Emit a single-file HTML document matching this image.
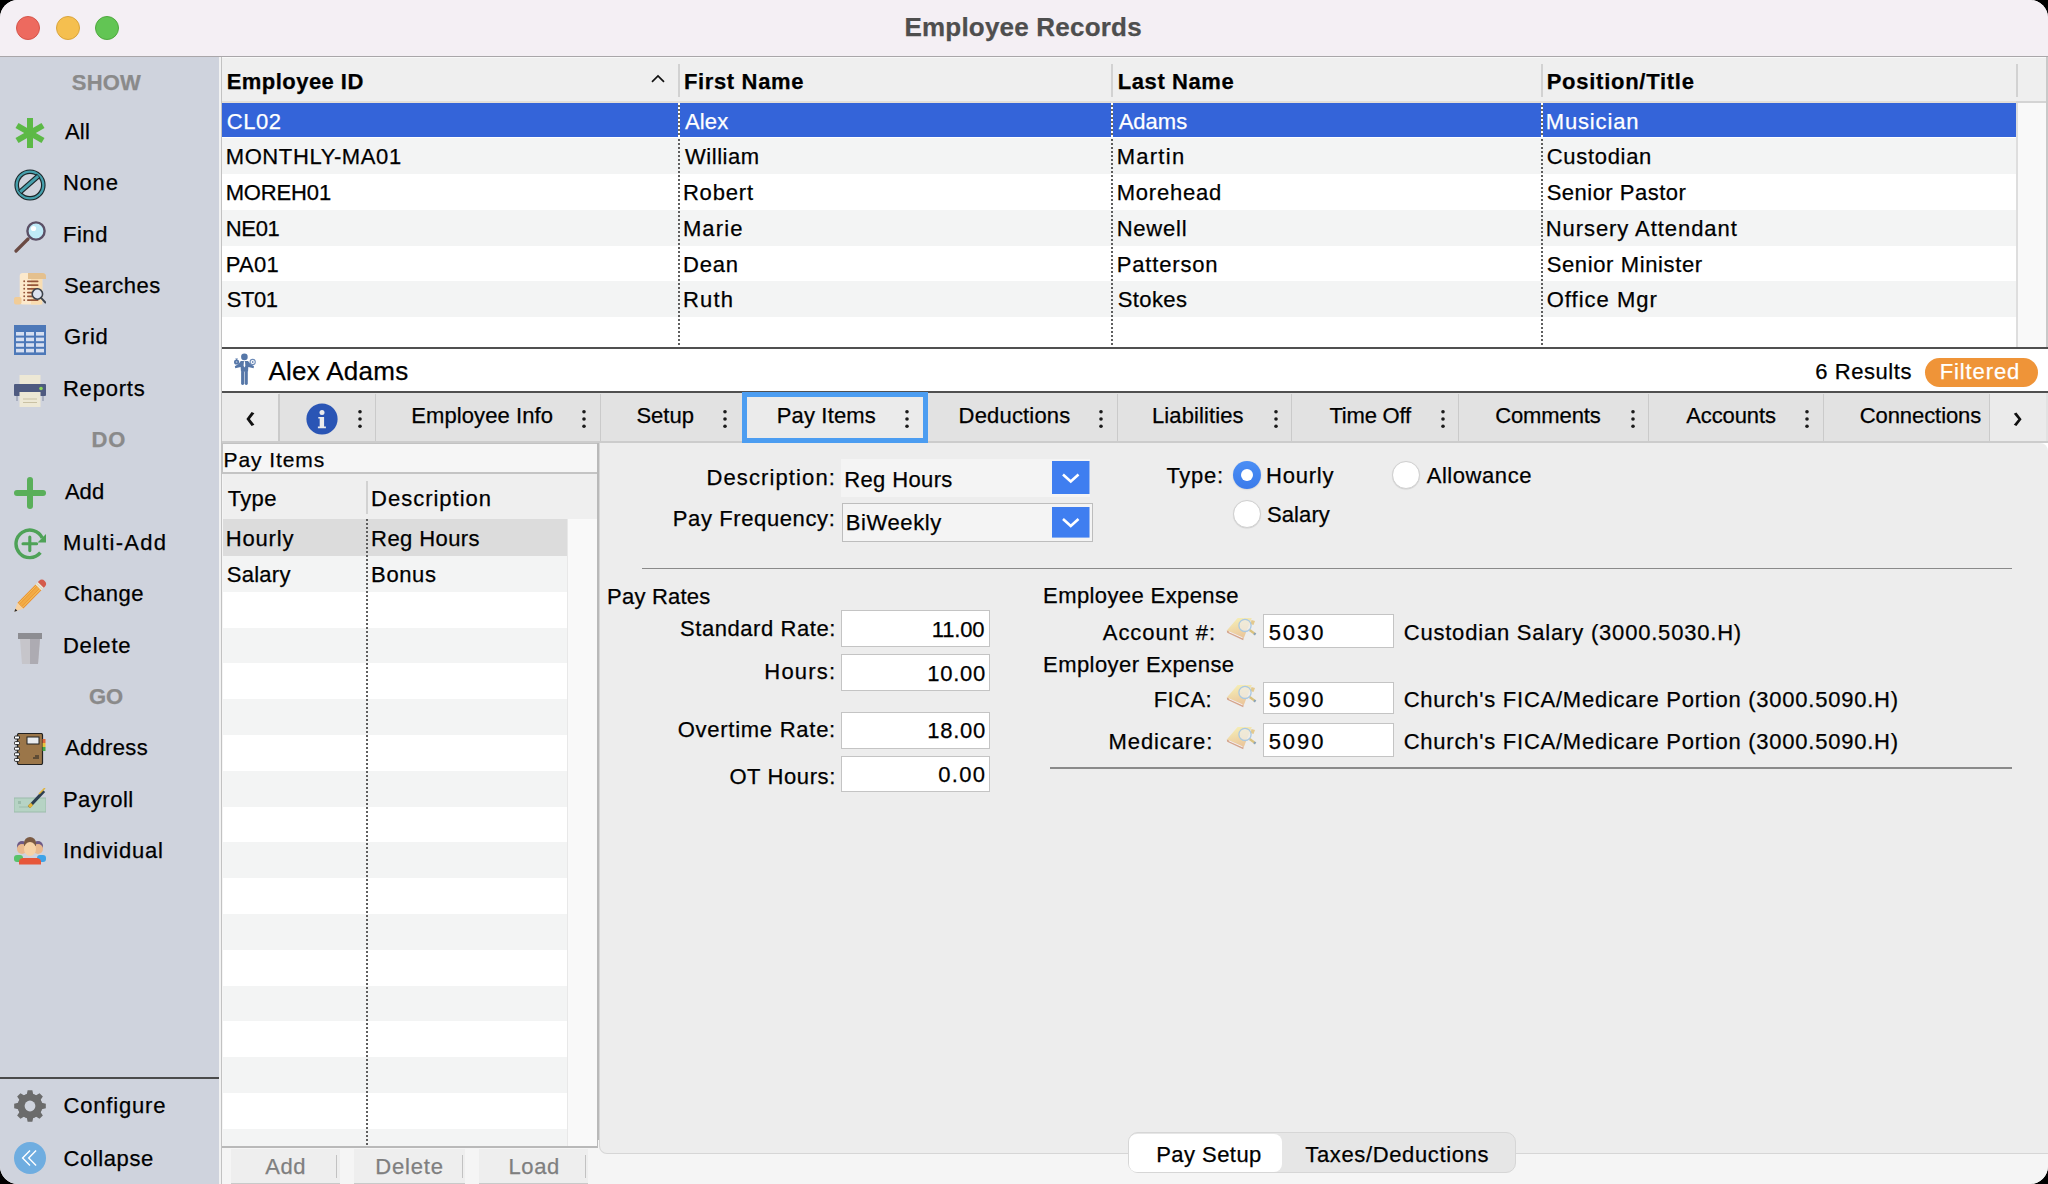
<!DOCTYPE html>
<html><head><meta charset="utf-8"><style>
html,body{margin:0;padding:0;background:#000;}
#w{position:relative;width:2048px;height:1184px;overflow:hidden;border-radius:18px;background:#fff;font-family:"Liberation Sans", sans-serif;color:#000;}
.t{position:absolute;white-space:nowrap;-webkit-text-stroke:0.25px currentColor;}
.r{position:absolute;}
</style></head><body><div id="w">
<div class="r" style="left:0px;top:0px;width:2048px;height:57px;background:#f4eff4;"></div>
<div class="r" style="left:0px;top:56px;width:2048px;height:1px;background:#a9a6a9;"></div>
<div class="r" style="left:15.799999999999999px;top:15.7px;width:24.2px;height:24.2px;border-radius:50%;background:#ed6a5f;box-sizing:border-box;border:1px solid #d5554b"></div>
<div class="r" style="left:55.6px;top:15.7px;width:24.2px;height:24.2px;border-radius:50%;background:#f5bf4f;box-sizing:border-box;border:1px solid #d9a43c"></div>
<div class="r" style="left:95.2px;top:15.7px;width:24.2px;height:24.2px;border-radius:50%;background:#62c554;box-sizing:border-box;border:1px solid #4fa83f"></div>
<div class="t" style="top:14.49px;font-size:26px;line-height:26px;font-weight:700;color:#4e4e4e;letter-spacing:0.200px;left:904.50px;">Employee Records</div>
<div class="r" style="left:0px;top:57px;width:219px;height:1127px;background:#cfd3dd;"></div>
<div class="r" style="left:219px;top:57px;width:2px;height:1127px;background:#f2f2f2;"></div>
<div class="r" style="left:221px;top:57px;width:2px;height:1127px;background:#c2c2c2;"></div>
<div class="t" style="top:71.57px;font-size:22px;line-height:22px;font-weight:700;color:#8a8a8a;letter-spacing:0.167px;left:71.80px;">SHOW</div>
<div class="t" style="top:429.17px;font-size:22px;line-height:22px;font-weight:700;color:#8a8a8a;letter-spacing:0.750px;left:91.50px;">DO</div>
<div class="t" style="top:685.92px;font-size:22px;line-height:22px;font-weight:700;color:#8a8a8a;left:89.00px;">GO</div>
<div class="t" style="top:121.07px;font-size:22px;line-height:22px;letter-spacing:0.300px;left:64.90px;">All</div>
<div class="t" style="top:172.42px;font-size:22px;line-height:22px;letter-spacing:0.800px;left:62.90px;">None</div>
<div class="t" style="top:223.77px;font-size:22px;line-height:22px;letter-spacing:0.567px;left:62.90px;">Find</div>
<div class="t" style="top:275.12px;font-size:22px;line-height:22px;letter-spacing:0.479px;left:63.90px;">Searches</div>
<div class="t" style="top:326.47px;font-size:22px;line-height:22px;letter-spacing:0.783px;left:63.90px;">Grid</div>
<div class="t" style="top:377.82px;font-size:22px;line-height:22px;letter-spacing:0.808px;left:62.90px;">Reports</div>
<div class="t" style="top:480.52px;font-size:22px;line-height:22px;letter-spacing:0.050px;left:64.90px;">Add</div>
<div class="t" style="top:531.87px;font-size:22px;line-height:22px;letter-spacing:1.262px;left:62.90px;">Multi-Add</div>
<div class="t" style="top:583.22px;font-size:22px;line-height:22px;letter-spacing:0.520px;left:63.90px;">Change</div>
<div class="t" style="top:634.57px;font-size:22px;line-height:22px;letter-spacing:0.820px;left:62.90px;">Delete</div>
<div class="t" style="top:737.27px;font-size:22px;line-height:22px;letter-spacing:0.350px;left:64.90px;">Address</div>
<div class="t" style="top:788.62px;font-size:22px;line-height:22px;letter-spacing:0.517px;left:62.90px;">Payroll</div>
<div class="t" style="top:839.97px;font-size:22px;line-height:22px;letter-spacing:0.789px;left:62.90px;">Individual</div>
<svg class="r" style="left:14px;top:117px" width="32" height="32" viewBox="0 0 32 32"><g stroke="#5cb946" stroke-width="6"><line x1="16" y1="1" x2="16" y2="31"/><line x1="3" y1="8.5" x2="29" y2="23.5"/><line x1="3" y1="23.5" x2="29" y2="8.5"/></g></svg>
<svg class="r" style="left:14px;top:168.9px" width="32" height="32" viewBox="0 0 32 32"><circle cx="16" cy="16" r="15.6" fill="#1b2629"/><circle cx="16" cy="16" r="14.5" fill="#46a0ad"/><circle cx="16" cy="16" r="12.2" fill="#1b2629"/><circle cx="16" cy="16" r="11" fill="#cfd3dd"/><line x1="5.8" y1="23.2" x2="24.6" y2="6.8" stroke="#1b2629" stroke-width="5.2"/><line x1="6.2" y1="22.8" x2="24.2" y2="7.2" stroke="#46a0ad" stroke-width="3"/></svg>
<svg class="r" style="left:14px;top:221px" width="32" height="32" viewBox="0 0 32 32"><line x1="2" y1="30" x2="14" y2="18" stroke="#6b4a43" stroke-width="3.2" stroke-linecap="round"/><circle cx="22" cy="10" r="8.6" fill="#bfeaf7" stroke="#5b5066" stroke-width="2.4"/><circle cx="19.5" cy="7.5" r="2.6" fill="#fff"/></svg>
<svg class="r" style="left:14px;top:272.5px" width="32" height="32" viewBox="0 0 32 32"><rect x="5.7" y="0" width="22.6" height="31.5" rx="3" fill="#fce9cc"/><rect x="17" y="0" width="11.3" height="31.5" fill="#f9ddb2"/><path d="M14 0 H28.5 a3.5 3.5 0 0 1 3.5 3.5 v2.5 H14 Z" fill="#e4c08e"/><rect x="0" y="24" width="7.5" height="7.5" rx="2" fill="#f1cc97"/><g fill="#95553a"><circle cx="10.2" cy="8.3" r="0.95"/><rect x="13" y="7.5" width="11.5" height="1.7" rx="0.8"/><circle cx="10.2" cy="12.100000000000001" r="0.95"/><rect x="13" y="11.3" width="11.5" height="1.7" rx="0.8"/><circle cx="10.2" cy="15.8" r="0.95"/><rect x="13" y="15" width="11.5" height="1.7" rx="0.8"/><circle cx="10.2" cy="19.6" r="0.95"/><rect x="13" y="18.8" width="11.5" height="1.7" rx="0.8"/><circle cx="10.2" cy="23.3" r="0.95"/><rect x="13" y="22.5" width="11.5" height="1.7" rx="0.8"/><circle cx="10.2" cy="27.1" r="0.95"/><rect x="13" y="26.3" width="11.5" height="1.7" rx="0.8"/></g><circle cx="23.4" cy="21" r="5.2" fill="#dde3f0" stroke="#3d434c" stroke-width="1.6"/><line x1="27.1" y1="24.8" x2="31.4" y2="29.6" stroke="#3d434c" stroke-width="1.9" stroke-linecap="round"/></svg>
<svg class="r" style="left:14px;top:325px" width="32" height="32" viewBox="0 0 32 32"><rect x="0" y="0" width="32" height="30" fill="#4d78b8"/><g fill="#d7dff0"><rect x="2" y="7.0" width="8" height="3.6"/><rect x="12" y="7.0" width="8" height="3.6"/><rect x="22" y="7.0" width="8" height="3.6"/><rect x="2" y="12.6" width="8" height="3.6"/><rect x="12" y="12.6" width="8" height="3.6"/><rect x="22" y="12.6" width="8" height="3.6"/><rect x="2" y="18.2" width="8" height="3.6"/><rect x="12" y="18.2" width="8" height="3.6"/><rect x="22" y="18.2" width="8" height="3.6"/><rect x="2" y="23.799999999999997" width="8" height="3.6"/><rect x="12" y="23.799999999999997" width="8" height="3.6"/><rect x="22" y="23.799999999999997" width="8" height="3.6"/></g></svg>
<svg class="r" style="left:14px;top:375px" width="32" height="32" viewBox="0 0 32 32"><rect x="5.5" y="0" width="21" height="12" fill="#ede8d5"/><rect x="0" y="9" width="32" height="12" rx="1" fill="#4e5a80"/><rect x="2" y="21" width="2" height="5" fill="#aab0c0"/><rect x="28" y="21" width="2" height="5" fill="#aab0c0"/><circle cx="27" cy="13.5" r="1.8" fill="#8fd65a"/><rect x="5.5" y="17" width="21" height="15" fill="#ede8d5"/><g stroke="#c9c1a4" stroke-width="1"><line x1="9" y1="24" x2="23" y2="24"/><line x1="9" y1="27.5" x2="23" y2="27.5"/></g></svg>
<svg class="r" style="left:14px;top:477px" width="32" height="32" viewBox="0 0 32 32"><g stroke="#5aaf5a" stroke-width="6" stroke-linecap="round"><line x1="16" y1="3" x2="16" y2="29"/><line x1="3" y1="16" x2="29" y2="16"/></g></svg>
<svg class="r" style="left:14px;top:528px" width="32" height="32" viewBox="0 0 32 32"><path d="M28.3 10 A13.8 13.8 0 1 0 26.4 24.7" fill="none" stroke="#4ea257" stroke-width="3.4"/><path d="M32.3 5.6 L32.3 14.4 L23.6 14.4 Z" fill="#4ea257"/><g stroke="#4ea257" stroke-width="3.1" stroke-linecap="round"><line x1="15.8" y1="9" x2="15.8" y2="22.6"/><line x1="9" y1="15.8" x2="22.6" y2="15.8"/></g></svg>
<svg class="r" style="left:14px;top:632px" width="32" height="32" viewBox="0 0 32 32"><rect x="4" y="1" width="24" height="6" fill="#8d8d92"/><path d="M6 7 H26 L24 32 H8 Z" fill="#c6c5ca"/><path d="M16 7 H26 L24 32 H16 Z" fill="#adabb2"/></svg>
<svg class="r" style="left:14px;top:733px" width="32" height="32" viewBox="0 0 32 32"><rect x="3.5" y="0.5" width="25" height="31" rx="1.5" fill="#9b7649" stroke="#222" stroke-width="1.2"/><rect x="13" y="4" width="12" height="7" fill="#e9ecef" stroke="#222" stroke-width="1"/><g fill="#fff" stroke="#222" stroke-width="1"><rect x="0.5" y="3.0" width="5" height="3" rx="1"/><rect x="0.5" y="8.6" width="5" height="3" rx="1"/><rect x="0.5" y="14.2" width="5" height="3" rx="1"/><rect x="0.5" y="19.799999999999997" width="5" height="3" rx="1"/><rect x="0.5" y="25.4" width="5" height="3" rx="1"/></g><rect x="28.5" y="6" width="3" height="4" fill="#e06a3a"/><rect x="28.5" y="10" width="3" height="4" fill="#e8c23a"/><rect x="28.5" y="14" width="3" height="4" fill="#48a848"/><line x1="19" y1="25" x2="25" y2="25" stroke="#222"/><line x1="21" y1="23" x2="25" y2="23" stroke="#222"/></svg>
<svg class="r" style="left:14px;top:788px" width="32" height="32" viewBox="0 0 32 32"><rect x="0" y="10" width="32" height="14" fill="#b6d3c4" stroke="#9cbcab" stroke-width="1"/><rect x="4" y="13" width="3" height="3" fill="#9cbcab"/><line x1="5" y1="19" x2="16" y2="19" stroke="#9cbcab" stroke-width="1"/><line x1="15" y1="19" x2="30" y2="3" stroke="#2c3e50" stroke-width="3.2"/><line x1="15" y1="19" x2="18" y2="16" stroke="#e0b43a" stroke-width="3.2"/><line x1="25" y1="6" x2="31" y2="0" stroke="#e0b43a" stroke-width="1.5"/></svg>
<svg class="r" style="left:14px;top:836px" width="32" height="32" viewBox="0 0 32 32"><circle cx="8" cy="10" r="5" fill="#6d5a86"/><circle cx="24" cy="10" r="5" fill="#6d5a86"/><circle cx="8" cy="13" r="5" fill="#e9b98e"/><circle cx="24" cy="13" r="5" fill="#e9b98e"/><rect x="0" y="19" width="9" height="7" rx="3" fill="#57c26a"/><rect x="23" y="19" width="9" height="7" rx="3" fill="#3da3e8"/><path d="M10 7 a6 6 0 0 1 12 0 v3 h-12 z" fill="#7b5a43"/><ellipse cx="16" cy="13" rx="6" ry="7" fill="#f6d2a6"/><path d="M5 27 a4 4 0 0 1 4 -5 h14 a4 4 0 0 1 4 5 v1.5 h-22 z" fill="#e6573a"/></svg>
<svg class="r" style="left:10px;top:574px" width="40" height="42" viewBox="0 0 40 42"><g transform="translate(4.3 37.8) rotate(-45.4) scale(0.93)"><path d="M0 0 L9.5 -4.4 L9.5 4.4 Z" fill="#f7d2a2"/><path d="M0 0 L3.2 -1.5 L3.2 1.5 Z" fill="#2b2b2b"/><rect x="9.5" y="-4.4" width="27.5" height="8.8" fill="#ec9130"/><rect x="9.5" y="-1.6" width="27.5" height="3.2" fill="#f2ab45"/><rect x="9.5" y="-3.2" width="27.5" height="0.8" fill="#f3cf6a"/><rect x="9.5" y="2.4" width="27.5" height="0.8" fill="#f3cf6a"/><rect x="37" y="-4.4" width="3.6" height="8.8" fill="#eeeada"/><rect x="38.2" y="-4.4" width="0.9" height="8.8" fill="#d7d2b8"/><path d="M40.6 -4.4 h1.6 a4.4 4.4 0 0 1 0 8.8 h-1.6 Z" fill="#d45b4b"/></g></svg>
<div class="r" style="left:0px;top:1077px;width:219px;height:2px;background:#4a4a4a;"></div>
<div class="t" style="top:1095.27px;font-size:22px;line-height:22px;letter-spacing:0.812px;left:63.50px;">Configure</div>
<div class="t" style="top:1147.57px;font-size:22px;line-height:22px;letter-spacing:0.586px;left:63.50px;">Collapse</div>
<svg class="r" style="left:13.75px;top:1090.2px" width="32" height="32" viewBox="0 0 32 32"><path d="M12.82 4.12 L13.64 0.18 L18.36 0.18 L19.18 4.12 L22.15 5.35 L25.52 3.14 L28.86 6.48 L26.65 9.85 L27.88 12.82 L31.82 13.64 L31.82 18.36 L27.88 19.18 L26.65 22.15 L28.86 25.52 L25.52 28.86 L22.15 26.65 L19.18 27.88 L18.36 31.82 L13.64 31.82 L12.82 27.88 L9.85 26.65 L6.48 28.86 L3.14 25.52 L5.35 22.15 L4.12 19.18 L0.18 18.36 L0.18 13.64 L4.12 12.82 L5.35 9.85 L3.14 6.48 L6.48 3.14 L9.85 5.35 Z" fill="#6b6b6b"/><circle cx="16" cy="16" r="12.3" fill="#6b6b6b"/><circle cx="16" cy="16" r="5.4" fill="#cfd3dd"/></svg>
<svg class="r" style="left:14px;top:1141.8px" width="32" height="32" viewBox="0 0 32 32"><circle cx="16" cy="16" r="16" fill="#6fade0"/><g fill="none" stroke="#fff" stroke-width="1.4"><polyline points="16,8.6 8.6,16 16,23.4"/><polyline points="22.1,8.6 14.7,16 22.1,23.4"/></g></svg>
<div class="r" style="left:222px;top:57px;width:1826px;height:45px;background:#efefef;"></div>
<div class="r" style="left:222px;top:101px;width:1826px;height:1.5px;background:#e4dfd8;"></div>
<div class="t" style="top:71.17px;font-size:22px;line-height:22px;font-weight:700;letter-spacing:0.460px;left:226.70px;">Employee ID</div>
<div class="t" style="top:71.17px;font-size:22px;line-height:22px;font-weight:700;letter-spacing:0.656px;left:683.90px;">First Name</div>
<div class="t" style="top:71.17px;font-size:22px;line-height:22px;font-weight:700;letter-spacing:0.600px;left:1117.70px;">Last Name</div>
<div class="t" style="top:71.17px;font-size:22px;line-height:22px;font-weight:700;letter-spacing:0.731px;left:1546.70px;">Position/Title</div>
<div class="r" style="left:678px;top:64px;width:2px;height:32.7px;background:#d2d2d2;"></div>
<div class="r" style="left:1111px;top:64px;width:2px;height:32.7px;background:#d2d2d2;"></div>
<div class="r" style="left:1541px;top:64px;width:2px;height:32.7px;background:#d2d2d2;"></div>
<div class="r" style="left:2016px;top:64px;width:2px;height:32.7px;background:#d2d2d2;"></div>
<svg class="r" style="left:650px;top:73.5px" width="16" height="10" viewBox="0 0 16 10"><polyline points="2,7.8 8,2 14,7.8" fill="none" stroke="#111" stroke-width="1.7"/></svg>
<div class="r" style="left:222px;top:57px;width:1826px;height:1.2px;background:#f8f8f8;"></div>
<div class="r" style="left:222px;top:102.5px;width:1795px;height:35.75px;background:#fff;"></div>
<div class="r" style="left:222px;top:138.25px;width:1795px;height:35.75px;background:#f3f4f4;"></div>
<div class="r" style="left:222px;top:174.0px;width:1795px;height:35.75px;background:#fff;"></div>
<div class="r" style="left:222px;top:209.75px;width:1795px;height:35.75px;background:#f3f4f4;"></div>
<div class="r" style="left:222px;top:245.5px;width:1795px;height:35.75px;background:#fff;"></div>
<div class="r" style="left:222px;top:281.25px;width:1795px;height:35.75px;background:#f3f4f4;"></div>
<div class="r" style="left:222px;top:317.0px;width:1795px;height:30.0px;background:#fff;"></div>
<div class="r" style="left:222px;top:103.3px;width:1794px;height:33.5px;background:#3464d9;"></div>
<div class="t" style="top:110.67px;font-size:22px;line-height:22px;color:#fff;letter-spacing:0.567px;left:226.70px;">CL02</div>
<div class="t" style="top:110.67px;font-size:22px;line-height:22px;color:#fff;letter-spacing:0.200px;left:684.90px;">Alex</div>
<div class="t" style="top:110.67px;font-size:22px;line-height:22px;color:#fff;left:1118.70px;">Adams</div>
<div class="t" style="top:110.67px;font-size:22px;line-height:22px;color:#fff;letter-spacing:0.871px;left:1545.70px;">Musician</div>
<div class="t" style="top:146.27px;font-size:22px;line-height:22px;letter-spacing:0.618px;left:225.70px;">MONTHLY-MA01</div>
<div class="t" style="top:146.27px;font-size:22px;line-height:22px;letter-spacing:0.567px;left:684.90px;">William</div>
<div class="t" style="top:146.27px;font-size:22px;line-height:22px;letter-spacing:1.260px;left:1116.70px;">Martin</div>
<div class="t" style="top:146.27px;font-size:22px;line-height:22px;letter-spacing:0.700px;left:1546.70px;">Custodian</div>
<div class="t" style="top:181.97px;font-size:22px;line-height:22px;letter-spacing:-0.150px;left:225.70px;">MOREH01</div>
<div class="t" style="top:181.97px;font-size:22px;line-height:22px;letter-spacing:0.820px;left:682.90px;">Robert</div>
<div class="t" style="top:181.97px;font-size:22px;line-height:22px;letter-spacing:0.800px;left:1116.70px;">Morehead</div>
<div class="t" style="top:181.97px;font-size:22px;line-height:22px;letter-spacing:0.483px;left:1546.70px;">Senior Pastor</div>
<div class="t" style="top:217.57px;font-size:22px;line-height:22px;letter-spacing:-0.300px;left:225.70px;">NE01</div>
<div class="t" style="top:217.57px;font-size:22px;line-height:22px;letter-spacing:1.125px;left:682.90px;">Marie</div>
<div class="t" style="top:217.57px;font-size:22px;line-height:22px;letter-spacing:0.780px;left:1116.70px;">Newell</div>
<div class="t" style="top:217.57px;font-size:22px;line-height:22px;letter-spacing:0.938px;left:1545.70px;">Nursery Attendant</div>
<div class="t" style="top:253.87px;font-size:22px;line-height:22px;letter-spacing:0.267px;left:225.70px;">PA01</div>
<div class="t" style="top:253.87px;font-size:22px;line-height:22px;letter-spacing:0.867px;left:682.90px;">Dean</div>
<div class="t" style="top:253.87px;font-size:22px;line-height:22px;letter-spacing:0.838px;left:1116.70px;">Patterson</div>
<div class="t" style="top:253.87px;font-size:22px;line-height:22px;letter-spacing:0.621px;left:1546.70px;">Senior Minister</div>
<div class="t" style="top:288.97px;font-size:22px;line-height:22px;letter-spacing:-0.400px;left:226.70px;">ST01</div>
<div class="t" style="top:288.97px;font-size:22px;line-height:22px;letter-spacing:1.200px;left:682.90px;">Ruth</div>
<div class="t" style="top:288.97px;font-size:22px;line-height:22px;letter-spacing:0.400px;left:1117.70px;">Stokes</div>
<div class="t" style="top:288.97px;font-size:22px;line-height:22px;letter-spacing:1.022px;left:1546.70px;">Office Mgr</div>
<div class="r" style="left:678px;top:103px;width:2px;height:244px;background:repeating-linear-gradient(to bottom,#5e5e5e 0 2px,transparent 2px 4px)"></div>
<div class="r" style="left:678px;top:103.3px;width:2px;height:33.5px;background:repeating-linear-gradient(to bottom,#fff 0 2px,#6e6a60 2px 4px)"></div>
<div class="r" style="left:1111px;top:103px;width:2px;height:244px;background:repeating-linear-gradient(to bottom,#5e5e5e 0 2px,transparent 2px 4px)"></div>
<div class="r" style="left:1111px;top:103.3px;width:2px;height:33.5px;background:repeating-linear-gradient(to bottom,#fff 0 2px,#6e6a60 2px 4px)"></div>
<div class="r" style="left:1541px;top:103px;width:2px;height:244px;background:repeating-linear-gradient(to bottom,#5e5e5e 0 2px,transparent 2px 4px)"></div>
<div class="r" style="left:1541px;top:103.3px;width:2px;height:33.5px;background:repeating-linear-gradient(to bottom,#fff 0 2px,#6e6a60 2px 4px)"></div>
<div class="r" style="left:2016px;top:101px;width:30.2px;height:246px;background:#f9f9f9;"></div>
<div class="r" style="left:2016px;top:101px;width:1.5px;height:246px;background:#dedede;"></div>
<div class="r" style="left:2016px;top:101px;width:30.2px;height:2px;background:#d4d4d4;"></div>
<div class="r" style="left:2046.2px;top:57px;width:1.8px;height:290px;background:#c9c9c9;"></div>
<div class="r" style="left:2046.2px;top:393px;width:1.8px;height:48.5px;background:#c9c9c9;"></div>
<div class="r" style="left:222px;top:347px;width:1826px;height:1.8px;background:#505050;"></div>
<div class="r" style="left:222px;top:348.8px;width:1826px;height:42.2px;background:#fff;"></div>
<div class="r" style="left:222px;top:391px;width:1826px;height:1.8px;background:#505050;"></div>
<div class="t" style="top:357.59px;font-size:26px;line-height:26px;letter-spacing:0.289px;left:268.40px;">Alex Adams</div>
<div class="t" style="top:361.07px;font-size:22px;line-height:22px;letter-spacing:0.562px;left:1815.30px;">6 Results</div>
<div class="r" style="left:1924.7px;top:357.9px;width:113.3px;height:29px;border-radius:14.5px;background:#ef9438"></div>
<div class="t" style="top:361.07px;font-size:22px;line-height:22px;color:#fff;letter-spacing:0.900px;left:1939.70px;">Filtered</div>
<svg class="r" style="left:226px;top:350px" width="36" height="40" viewBox="0 0 36 40"><g fill="#5677a8"><circle cx="18.4" cy="6.9" r="3.3"/><path d="M14.8 11 L22 11 L24.5 14 L28 16.3 L27.6 18.3 L22.3 17 L22 21.8 L15 21.8 L14.6 17 L9.3 18.3 L8.8 16.3 L12.5 14 Z"/><rect x="15.1" y="21" width="3.1" height="14" rx="1.4"/><rect x="18.7" y="21" width="3.1" height="14" rx="1.4"/><circle cx="10.6" cy="12" r="2.6"/><path d="M9.2 8.6 L12 8.6 L10.6 10.2 Z"/></g><path d="M17.9 11.3 L19 11.3 L19.3 16 L18.45 17.6 L17.6 16 Z" fill="#fff"/><circle cx="10.6" cy="12" r="0.9" fill="#9fb3d0"/><circle cx="26.7" cy="12" r="2.6" fill="none" stroke="#6d8bb8" stroke-width="1.1"/><circle cx="26.7" cy="12" r="0.9" fill="#6d8bb8"/></svg>
<div class="r" style="left:222px;top:392.8px;width:1826px;height:48.7px;background:#e2e2e2;"></div>
<div class="r" style="left:1989.6px;top:392.8px;width:56.4px;height:48.7px;background:#ebebeb;"></div>
<div class="r" style="left:222px;top:392.8px;width:57px;height:48.7px;background:#ebebeb;"></div>
<div class="r" style="left:222px;top:441.4px;width:1826px;height:1.8px;background:#cccccc;"></div>
<div class="r" style="left:278.4px;top:394px;width:1.2px;height:47.4px;background:#cacaca;"></div>
<div class="r" style="left:375.2px;top:394px;width:1.2px;height:47.4px;background:#cacaca;"></div>
<div class="r" style="left:599.6999999999999px;top:394px;width:1.2px;height:47.4px;background:#cacaca;"></div>
<div class="r" style="left:1116.9px;top:394px;width:1.2px;height:47.4px;background:#cacaca;"></div>
<div class="r" style="left:1290.8000000000002px;top:394px;width:1.2px;height:47.4px;background:#cacaca;"></div>
<div class="r" style="left:1457.9px;top:394px;width:1.2px;height:47.4px;background:#cacaca;"></div>
<div class="r" style="left:1647.8000000000002px;top:394px;width:1.2px;height:47.4px;background:#cacaca;"></div>
<div class="r" style="left:1822.7px;top:394px;width:1.2px;height:47.4px;background:#cacaca;"></div>
<div class="r" style="left:1989.0px;top:394px;width:1.2px;height:47.4px;background:#cacaca;"></div>
<div class="r" style="left:744px;top:394px;width:182px;height:47.4px;background:#ebebeb;"></div>
<div class="r" style="left:741.8px;top:391.8px;width:185.9px;height:51.7px;box-sizing:border-box;border:5px solid #4c9df1"></div>
<div class="t" style="top:404.97px;font-size:22px;line-height:22px;letter-spacing:0.092px;left:411.30px;">Employee Info</div>
<svg class="r" style="left:580.8px;top:408px" width="6" height="22" viewBox="0 0 6 22"><circle cx="3" cy="3.7" r="1.8" fill="#1a1a1a"/><circle cx="3" cy="11" r="1.8" fill="#1a1a1a"/><circle cx="3" cy="18.3" r="1.8" fill="#1a1a1a"/></svg>
<div class="t" style="top:404.97px;font-size:22px;line-height:22px;letter-spacing:0.025px;left:636.40px;">Setup</div>
<svg class="r" style="left:722.2px;top:408px" width="6" height="22" viewBox="0 0 6 22"><circle cx="3" cy="3.7" r="1.8" fill="#1a1a1a"/><circle cx="3" cy="11" r="1.8" fill="#1a1a1a"/><circle cx="3" cy="18.3" r="1.8" fill="#1a1a1a"/></svg>
<div class="t" style="top:404.97px;font-size:22px;line-height:22px;letter-spacing:0.162px;left:776.70px;">Pay Items</div>
<svg class="r" style="left:904px;top:408px" width="6" height="22" viewBox="0 0 6 22"><circle cx="3" cy="3.7" r="1.8" fill="#1a1a1a"/><circle cx="3" cy="11" r="1.8" fill="#1a1a1a"/><circle cx="3" cy="18.3" r="1.8" fill="#1a1a1a"/></svg>
<div class="t" style="top:404.97px;font-size:22px;line-height:22px;letter-spacing:0.178px;left:958.60px;">Deductions</div>
<svg class="r" style="left:1097.9px;top:408px" width="6" height="22" viewBox="0 0 6 22"><circle cx="3" cy="3.7" r="1.8" fill="#1a1a1a"/><circle cx="3" cy="11" r="1.8" fill="#1a1a1a"/><circle cx="3" cy="18.3" r="1.8" fill="#1a1a1a"/></svg>
<div class="t" style="top:404.97px;font-size:22px;line-height:22px;letter-spacing:0.110px;left:1152.00px;">Liabilities</div>
<svg class="r" style="left:1272.6px;top:408px" width="6" height="22" viewBox="0 0 6 22"><circle cx="3" cy="3.7" r="1.8" fill="#1a1a1a"/><circle cx="3" cy="11" r="1.8" fill="#1a1a1a"/><circle cx="3" cy="18.3" r="1.8" fill="#1a1a1a"/></svg>
<div class="t" style="top:404.97px;font-size:22px;line-height:22px;letter-spacing:-0.200px;left:1329.40px;">Time Off</div>
<svg class="r" style="left:1439.7px;top:408px" width="6" height="22" viewBox="0 0 6 22"><circle cx="3" cy="3.7" r="1.8" fill="#1a1a1a"/><circle cx="3" cy="11" r="1.8" fill="#1a1a1a"/><circle cx="3" cy="18.3" r="1.8" fill="#1a1a1a"/></svg>
<div class="t" style="top:404.97px;font-size:22px;line-height:22px;letter-spacing:-0.114px;left:1495.20px;">Comments</div>
<svg class="r" style="left:1629.5px;top:408px" width="6" height="22" viewBox="0 0 6 22"><circle cx="3" cy="3.7" r="1.8" fill="#1a1a1a"/><circle cx="3" cy="11" r="1.8" fill="#1a1a1a"/><circle cx="3" cy="18.3" r="1.8" fill="#1a1a1a"/></svg>
<div class="t" style="top:404.97px;font-size:22px;line-height:22px;letter-spacing:-0.100px;left:1686.20px;">Accounts</div>
<svg class="r" style="left:1804.3px;top:408px" width="6" height="22" viewBox="0 0 6 22"><circle cx="3" cy="3.7" r="1.8" fill="#1a1a1a"/><circle cx="3" cy="11" r="1.8" fill="#1a1a1a"/><circle cx="3" cy="18.3" r="1.8" fill="#1a1a1a"/></svg>
<div class="t" style="top:404.97px;font-size:22px;line-height:22px;letter-spacing:-0.070px;left:1859.70px;">Connections</div>
<svg class="r" style="left:357px;top:408px" width="6" height="22" viewBox="0 0 6 22"><circle cx="3" cy="3.7" r="1.8" fill="#1a1a1a"/><circle cx="3" cy="11" r="1.8" fill="#1a1a1a"/><circle cx="3" cy="18.3" r="1.8" fill="#1a1a1a"/></svg>
<svg class="r" style="left:0;top:0" width="2048" height="450"><path d="M251.6 412 L254.4 413.3 L249.9 419 L254.4 424.7 L251.6 426 L246.4 419 Z" fill="#111"/><path d="M2016.4 412.4 L2013.8 413.7 L2018.3 419.2 L2013.8 424.7 L2016.4 426 L2021.6 419.2 Z" fill="#111"/></svg>
<svg class="r" style="left:306px;top:403px" width="32" height="32" viewBox="0 0 32 32"><circle cx="16" cy="16" r="15.6" fill="#2a55b5"/><circle cx="16" cy="9.5" r="2.5" fill="#ececec"/><path d="M12.3 14 h5.8 v9.6 h1.8 v1.6 h-8 v-1.6 h1.8 v-8 h-1.4 z" fill="#ececec"/></svg>
<div class="r" style="left:222px;top:443.2px;width:376px;height:741px;background:#f5f5f5;"></div>
<div class="r" style="left:221.5px;top:443.2px;width:377px;height:31px;box-sizing:border-box;border:1px solid #c2c2c2;border-bottom:2px solid #c4c4c4;background:#f6f6f6"></div>
<div class="t" style="top:449.02px;font-size:21px;line-height:21px;letter-spacing:0.912px;left:223.60px;">Pay Items</div>
<div class="r" style="left:223px;top:474.3px;width:374px;height:44.7px;background:#efefef;"></div>
<div class="t" style="top:487.87px;font-size:22px;line-height:22px;letter-spacing:0.300px;left:227.80px;">Type</div>
<div class="t" style="top:487.87px;font-size:22px;line-height:22px;letter-spacing:0.990px;left:371.10px;">Description</div>
<div class="r" style="left:366px;top:481px;width:2px;height:33px;background:#d2d2d2;"></div>
<div class="r" style="left:223px;top:519px;width:344.6px;height:37px;background:#dcdcdc;"></div>
<div class="r" style="left:223px;top:556.0px;width:344.6px;height:35.8px;background:#f3f4f4;"></div>
<div class="r" style="left:223px;top:591.8000000000001px;width:344.6px;height:35.8px;background:#fff;"></div>
<div class="r" style="left:223px;top:627.6px;width:344.6px;height:35.8px;background:#f3f4f4;"></div>
<div class="r" style="left:223px;top:663.4000000000001px;width:344.6px;height:35.8px;background:#fff;"></div>
<div class="r" style="left:223px;top:699.2px;width:344.6px;height:35.8px;background:#f3f4f4;"></div>
<div class="r" style="left:223px;top:735.0px;width:344.6px;height:35.8px;background:#fff;"></div>
<div class="r" style="left:223px;top:770.8px;width:344.6px;height:35.8px;background:#f3f4f4;"></div>
<div class="r" style="left:223px;top:806.6px;width:344.6px;height:35.8px;background:#fff;"></div>
<div class="r" style="left:223px;top:842.4000000000001px;width:344.6px;height:35.8px;background:#f3f4f4;"></div>
<div class="r" style="left:223px;top:878.2px;width:344.6px;height:35.8px;background:#fff;"></div>
<div class="r" style="left:223px;top:914.0px;width:344.6px;height:35.8px;background:#f3f4f4;"></div>
<div class="r" style="left:223px;top:949.8px;width:344.6px;height:35.8px;background:#fff;"></div>
<div class="r" style="left:223px;top:985.6px;width:344.6px;height:35.8px;background:#f3f4f4;"></div>
<div class="r" style="left:223px;top:1021.4px;width:344.6px;height:35.8px;background:#fff;"></div>
<div class="r" style="left:223px;top:1057.2px;width:344.6px;height:35.8px;background:#f3f4f4;"></div>
<div class="r" style="left:223px;top:1093.0px;width:344.6px;height:35.8px;background:#fff;"></div>
<div class="r" style="left:223px;top:1128.8px;width:344.6px;height:17.200000000000045px;background:#f3f4f4;"></div>
<div class="r" style="left:366px;top:519px;width:2px;height:627px;background:repeating-linear-gradient(to bottom,#5e5e5e 0 2px,transparent 2px 4px)"></div>
<div class="t" style="top:527.77px;font-size:22px;line-height:22px;letter-spacing:0.820px;left:225.80px;">Hourly</div>
<div class="t" style="top:527.77px;font-size:22px;line-height:22px;letter-spacing:0.412px;left:371.10px;">Reg Hours</div>
<div class="t" style="top:563.97px;font-size:22px;line-height:22px;letter-spacing:0.260px;left:226.80px;">Salary</div>
<div class="t" style="top:563.97px;font-size:22px;line-height:22px;letter-spacing:0.625px;left:371.10px;">Bonus</div>
<div class="r" style="left:567.6px;top:519px;width:30px;height:627px;background:#f9f9f9;"></div>
<div class="r" style="left:567.3px;top:519px;width:0.8px;height:627px;background:#e8e8e8;"></div>
<div class="r" style="left:597px;top:443.2px;width:1.5px;height:704.3px;background:#b9b9b9;"></div>
<div class="r" style="left:222px;top:1146px;width:376.5px;height:1.5px;background:#b9b9b9;"></div>
<div class="r" style="left:222px;top:1147.5px;width:376px;height:36.5px;background:#f5f5f5;"></div>
<div class="r" style="left:230.7px;top:1148.8px;width:109.0px;height:35.2px;background:#eeeeee;"></div>
<div class="r" style="left:230.7px;top:1182.5px;width:109.0px;height:1.5px;background:#c9c9c9;"></div>
<div class="r" style="left:336.3px;top:1155px;width:1.2px;height:23px;background:#c2c2c2;"></div>
<div class="t" style="top:1156.17px;font-size:22px;line-height:22px;color:#7f7f7f;letter-spacing:0.550px;left:265.30px;">Add</div>
<div class="r" style="left:354.2px;top:1148.8px;width:110.80000000000001px;height:35.2px;background:#eeeeee;"></div>
<div class="r" style="left:354.2px;top:1182.5px;width:110.80000000000001px;height:1.5px;background:#c9c9c9;"></div>
<div class="r" style="left:461.7px;top:1155px;width:1.2px;height:23px;background:#c2c2c2;"></div>
<div class="t" style="top:1156.17px;font-size:22px;line-height:22px;color:#7f7f7f;letter-spacing:0.820px;left:375.20px;">Delete</div>
<div class="r" style="left:479.2px;top:1148.8px;width:109.30000000000001px;height:35.2px;background:#eeeeee;"></div>
<div class="r" style="left:479.2px;top:1182.5px;width:109.30000000000001px;height:1.5px;background:#c9c9c9;"></div>
<div class="r" style="left:585.1px;top:1155px;width:1.2px;height:23px;background:#c2c2c2;"></div>
<div class="t" style="top:1156.17px;font-size:22px;line-height:22px;color:#7f7f7f;letter-spacing:0.633px;left:508.40px;">Load</div>
<div class="r" style="left:598px;top:1140px;width:1450px;height:44px;background:#f5f5f5;"></div>
<div class="r" style="left:598.5px;top:443.2px;width:1449.5px;height:710.5px;background:#ededed;border-top-right-radius:8px;border-bottom-left-radius:8px;box-sizing:border-box;border-left:1px solid #d5d5d5;border-bottom:1.2px solid #d6d6d6"></div>
<div class="t" style="top:467.37px;font-size:22px;line-height:22px;letter-spacing:1.109px;left:706.50px;">Description:</div>
<div class="r" style="left:841px;top:458.9px;width:249.3px;height:37.8px;background:#f4f4f4;"></div>
<div class="t" style="top:468.57px;font-size:22px;line-height:22px;letter-spacing:0.375px;left:844.20px;">Reg Hours</div>
<div class="t" style="top:507.87px;font-size:22px;line-height:22px;letter-spacing:0.608px;left:672.80px;">Pay Frequency:</div>
<div class="r" style="left:841.5px;top:503px;width:251.8px;height:38.6px;box-sizing:border-box;background:#f4f4f4;border:1.5px solid #bdbdbd"></div>
<div class="t" style="top:512.37px;font-size:22px;line-height:22px;letter-spacing:0.600px;left:845.80px;">BiWeekly</div>
<svg class="r" style="left:1052.2px;top:461.2px" width="37.5" height="33.2" viewBox="0 0 37.5 33.2"><rect width="37.5" height="33.2" fill="#3f7ef0"/><polyline points="11,13.5 18.75,20.5 26.5,13.5" fill="none" stroke="#fff" stroke-width="2.6"/></svg>
<svg class="r" style="left:1052.2px;top:507.2px" width="37.5" height="30.6" viewBox="0 0 37.5 30.6"><rect width="37.5" height="30.6" fill="#3f7ef0"/><polyline points="11,12 18.75,19 26.5,12" fill="none" stroke="#fff" stroke-width="2.6"/></svg>
<div class="t" style="top:464.67px;font-size:22px;line-height:22px;letter-spacing:0.725px;left:1166.40px;">Type:</div>
<div class="r" style="left:1232.8px;top:460.8px;width:28px;height:28px;border-radius:50%;background:linear-gradient(#4a8ef5,#3b7bea);box-shadow:0 0.5px 1.5px rgba(0,0,0,.15)"></div>
<div class="r" style="left:1240.8px;top:468.9px;width:11.8px;height:11.8px;border-radius:50%;background:#fff"></div>
<div class="r" style="left:1232.7px;top:500px;width:28px;height:28px;border-radius:50%;background:#fff;box-sizing:border-box;border:1px solid #d0d0d0;box-shadow:0 0.5px 1px rgba(0,0,0,.12)"></div>
<div class="r" style="left:1391.6px;top:460.9px;width:28px;height:28px;border-radius:50%;background:#fff;box-sizing:border-box;border:1px solid #d0d0d0;box-shadow:0 0.5px 1px rgba(0,0,0,.12)"></div>
<div class="t" style="top:464.67px;font-size:22px;line-height:22px;letter-spacing:0.780px;left:1266.00px;">Hourly</div>
<div class="t" style="top:503.77px;font-size:22px;line-height:22px;letter-spacing:0.100px;left:1267.00px;">Salary</div>
<div class="t" style="top:464.67px;font-size:22px;line-height:22px;letter-spacing:0.562px;left:1426.70px;">Allowance</div>
<div class="r" style="left:642px;top:567.5px;width:1370px;height:1.8px;background:#8a8a8a;"></div>
<div class="t" style="top:586.37px;font-size:22px;line-height:22px;letter-spacing:0.200px;left:607.10px;">Pay Rates</div>
<div class="t" style="top:617.57px;font-size:22px;line-height:22px;letter-spacing:0.562px;left:680.00px;">Standard Rate:</div>
<div class="r" style="left:841.1px;top:610.4px;width:148.7px;height:37.10000000000002px;box-sizing:border-box;background:#fff;border:1.2px solid #c4c4c4"></div>
<div class="t" style="top:619.37px;font-size:22px;line-height:22px;letter-spacing:-0.125px;left:931.70px;">11.00</div>
<div class="t" style="top:661.37px;font-size:22px;line-height:22px;letter-spacing:1.200px;left:764.30px;">Hours:</div>
<div class="r" style="left:841.1px;top:654.2px;width:148.7px;height:36.39999999999998px;box-sizing:border-box;background:#fff;border:1.2px solid #c4c4c4"></div>
<div class="t" style="top:663.17px;font-size:22px;line-height:22px;letter-spacing:0.750px;left:927.20px;">10.00</div>
<div class="t" style="top:719.27px;font-size:22px;line-height:22px;letter-spacing:0.738px;left:677.70px;">Overtime Rate:</div>
<div class="r" style="left:841.1px;top:711.5px;width:148.7px;height:37.10000000000002px;box-sizing:border-box;background:#fff;border:1.2px solid #c4c4c4"></div>
<div class="t" style="top:720.47px;font-size:22px;line-height:22px;letter-spacing:0.750px;left:927.20px;">18.00</div>
<div class="t" style="top:766.47px;font-size:22px;line-height:22px;letter-spacing:0.612px;left:729.40px;">OT Hours:</div>
<div class="r" style="left:841.1px;top:755.5px;width:148.7px;height:36.89999999999998px;box-sizing:border-box;background:#fff;border:1.2px solid #c4c4c4"></div>
<div class="t" style="top:764.27px;font-size:22px;line-height:22px;letter-spacing:1.300px;left:938.30px;">0.00</div>
<div class="t" style="top:585.37px;font-size:22px;line-height:22px;letter-spacing:0.393px;left:1043.10px;">Employee Expense</div>
<div class="t" style="top:654.47px;font-size:22px;line-height:22px;letter-spacing:0.420px;left:1043.10px;">Employer Expense</div>
<div class="t" style="top:621.97px;font-size:22px;line-height:22px;letter-spacing:0.922px;left:1102.80px;">Account #:</div>
<svg class="r" style="left:1220px;top:610.0px" width="40" height="40" viewBox="0 0 40 40"><defs><linearGradient id="lg5030614" x1="0" y1="0" x2="0.3" y2="1"><stop offset="0" stop-color="#f6f2b8"/><stop offset="1" stop-color="#ebc79c"/></linearGradient></defs><path d="M6.8 20.5 L17.6 8 L31.8 8 L23.6 28.4 Z" fill="url(#lg5030614)"/><path d="M6.8 20.5 L23.6 28.4 L23.2 30.2 L7.2 22.8 Z" fill="#d5a58c"/><path d="M9 21.8 L22.5 27.8" stroke="#f4f1f6" stroke-width="0.9"/><path d="M31.5 10 L35 11 L33.5 15 L30.5 14 Z" fill="#e3c98e"/><line x1="29.6" y1="20" x2="35.2" y2="24.2" stroke="#d9c27f" stroke-width="2.3"/><line x1="34" y1="23.3" x2="35.6" y2="24.5" stroke="#8aa3b8" stroke-width="2.3"/><circle cx="25" cy="15.4" r="6.1" fill="#efece6" fill-opacity="0.75" stroke="#a9c8e2" stroke-width="1.3"/></svg>
<div class="r" style="left:1263.2px;top:614.4px;width:130.6px;height:33.200000000000045px;box-sizing:border-box;background:#fff;border:1.2px solid #c4c4c4"></div>
<div class="t" style="top:621.97px;font-size:22px;line-height:22px;letter-spacing:1.933px;left:1268.70px;">5030</div>
<div class="t" style="top:621.97px;font-size:22px;line-height:22px;letter-spacing:0.800px;left:1403.70px;">Custodian Salary (3000.5030.H)</div>
<div class="t" style="top:688.67px;font-size:22px;line-height:22px;letter-spacing:0.425px;left:1153.70px;">FICA:</div>
<svg class="r" style="left:1220px;top:677.4px" width="40" height="40" viewBox="0 0 40 40"><defs><linearGradient id="lg5090681" x1="0" y1="0" x2="0.3" y2="1"><stop offset="0" stop-color="#f6f2b8"/><stop offset="1" stop-color="#ebc79c"/></linearGradient></defs><path d="M6.8 20.5 L17.6 8 L31.8 8 L23.6 28.4 Z" fill="url(#lg5090681)"/><path d="M6.8 20.5 L23.6 28.4 L23.2 30.2 L7.2 22.8 Z" fill="#d5a58c"/><path d="M9 21.8 L22.5 27.8" stroke="#f4f1f6" stroke-width="0.9"/><path d="M31.5 10 L35 11 L33.5 15 L30.5 14 Z" fill="#e3c98e"/><line x1="29.6" y1="20" x2="35.2" y2="24.2" stroke="#d9c27f" stroke-width="2.3"/><line x1="34" y1="23.3" x2="35.6" y2="24.5" stroke="#8aa3b8" stroke-width="2.3"/><circle cx="25" cy="15.4" r="6.1" fill="#efece6" fill-opacity="0.75" stroke="#a9c8e2" stroke-width="1.3"/></svg>
<div class="r" style="left:1263.2px;top:681.8px;width:130.6px;height:32.700000000000045px;box-sizing:border-box;background:#fff;border:1.2px solid #c4c4c4"></div>
<div class="t" style="top:688.67px;font-size:22px;line-height:22px;letter-spacing:1.933px;left:1268.70px;">5090</div>
<div class="t" style="top:688.67px;font-size:22px;line-height:22px;letter-spacing:0.765px;left:1403.70px;">Church&#39;s FICA/Medicare Portion (3000.5090.H)</div>
<div class="t" style="top:730.97px;font-size:22px;line-height:22px;letter-spacing:0.888px;left:1108.60px;">Medicare:</div>
<svg class="r" style="left:1220px;top:718.9px" width="40" height="40" viewBox="0 0 40 40"><defs><linearGradient id="lg5090723" x1="0" y1="0" x2="0.3" y2="1"><stop offset="0" stop-color="#f6f2b8"/><stop offset="1" stop-color="#ebc79c"/></linearGradient></defs><path d="M6.8 20.5 L17.6 8 L31.8 8 L23.6 28.4 Z" fill="url(#lg5090723)"/><path d="M6.8 20.5 L23.6 28.4 L23.2 30.2 L7.2 22.8 Z" fill="#d5a58c"/><path d="M9 21.8 L22.5 27.8" stroke="#f4f1f6" stroke-width="0.9"/><path d="M31.5 10 L35 11 L33.5 15 L30.5 14 Z" fill="#e3c98e"/><line x1="29.6" y1="20" x2="35.2" y2="24.2" stroke="#d9c27f" stroke-width="2.3"/><line x1="34" y1="23.3" x2="35.6" y2="24.5" stroke="#8aa3b8" stroke-width="2.3"/><circle cx="25" cy="15.4" r="6.1" fill="#efece6" fill-opacity="0.75" stroke="#a9c8e2" stroke-width="1.3"/></svg>
<div class="r" style="left:1263.2px;top:723.3px;width:130.6px;height:33.5px;box-sizing:border-box;background:#fff;border:1.2px solid #c4c4c4"></div>
<div class="t" style="top:730.97px;font-size:22px;line-height:22px;letter-spacing:1.933px;left:1268.70px;">5090</div>
<div class="t" style="top:730.97px;font-size:22px;line-height:22px;letter-spacing:0.765px;left:1403.70px;">Church&#39;s FICA/Medicare Portion (3000.5090.H)</div>
<div class="r" style="left:1049.5px;top:766.9px;width:962.5px;height:1.8px;background:#8a8a8a;"></div>
<div class="r" style="left:1127.5px;top:1132.2px;width:388.8px;height:41px;border-radius:10px;background:#e6e6e6;box-sizing:border-box;border:1px solid #d6d6d6"></div>
<div class="r" style="left:1128.5px;top:1134.3px;width:153.4px;height:37.5px;border-radius:8px;background:#fff"></div>
<div class="t" style="top:1144.07px;font-size:22px;line-height:22px;letter-spacing:0.450px;left:1156.20px;">Pay Setup</div>
<div class="t" style="top:1144.07px;font-size:22px;line-height:22px;letter-spacing:0.633px;left:1305.30px;">Taxes/Deductions</div>
</div></body></html>
